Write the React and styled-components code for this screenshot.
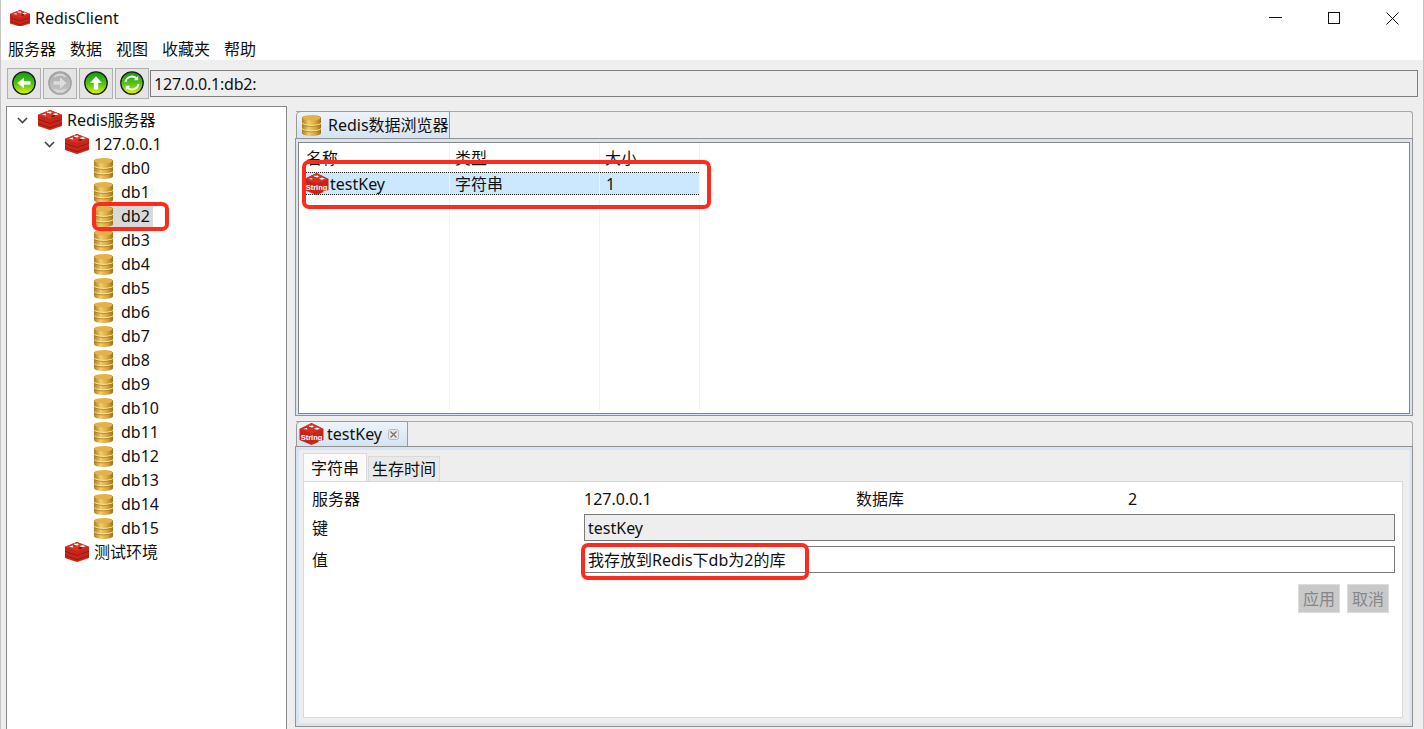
import React from 'react';
import styled, { createGlobalStyle } from 'styled-components';

const GlobalStyle = createGlobalStyle`
  html, body {
    margin: 0;
    padding: 0;
    background: #fff;
  }
  body {
    font-family: "Noto Sans", "Noto Sans CJK SC", sans-serif;
    font-size: 16px;
    line-height: 22px;
    color: #111;
  }
  * { box-sizing: border-box; }
  svg { flex: none; }
`;

const Window = styled.div`
  position: relative;
  width: 1424px;
  height: 729px;
  overflow: hidden;
  display: flex;
  flex-direction: column;
  border-left: 1px solid #c4c4c4;
  border-right: 1px solid #c4c4c4;
`;

const TitleBar = styled.div`
  height: 38px;
  display: flex;
  align-items: center;
  padding: 0 0 2px 9px;
  background: #fff;
`;

const TitleText = styled.span`
  margin-left: 5px;
  flex: 1;
`;

const WinControls = styled.div`
  display: flex;
  width: 154px;
  justify-content: space-between;
  padding-right: 24px;
`;

const MenuBar = styled.div`
  height: 22px;
  display: flex;
  gap: 14px;
  padding-left: 7px;
  background: #fff;
`;

const Toolbar = styled.div`
  height: 46px;
  display: flex;
  align-items: center;
  padding: 0 5px 0 6px;
  background: #eeeeee;
`;

const ToolButton = styled.div`
  width: 34px;
  height: 31px;
  margin-right: 2px;
  display: flex;
  align-items: center;
  justify-content: center;
  background: #e4e4e4;
  border: 1px solid #b0b0b0;
`;

const AddressBar = styled.div`
  flex: 1;
  height: 27px;
  margin-left: -1px;
  padding: 2px 3px;
  letter-spacing: -0.2px;
  background: #eeeeee;
  border: 1px solid #7e7e7e;
`;

const Main = styled.div`
  flex: 1;
  display: flex;
  gap: 8px;
  padding-left: 5px;
  background: #eeeeee;
  min-height: 0;
`;

const Tree = styled.div`
  width: 281px;
  height: 640px;
  padding-top: 1px;
  background: #fff;
  border: 1px solid #85898c;
  border-width: 1px 1.5px 1px 1.5px;
`;

const TreeRow = styled.div`
  height: 24px;
  display: flex;
  align-items: center;
  padding-left: ${({ $pad }) => $pad}px;
`;

const Chevron = styled.div`
  width: 16px;
  margin-right: 8px;
  display: flex;
  justify-content: center;
  flex: none;
`;

const TreeItem = styled.div`
  display: flex;
  align-items: center;
  height: 21px;
  background: ${({ $selected }) => ($selected ? '#d9d9d9' : 'transparent')};
`;

const TreeLabel = styled.span`
  margin-left: ${({ $gap }) => $gap}px;
  padding-right: 3px;
  white-space: nowrap;
`;

const RightSide = styled.div`
  width: 1118px;
  display: flex;
  flex-direction: column;
  gap: 5px;
  padding-top: 5px;
`;

const TabStrip = styled.div`
  display: flex;
  height: ${({ $h }) => $h}px;
  flex: none;
  border-top: 1px solid #a8a8a8;
  border-right: 1px solid #a8a8a8;
  border-top-right-radius: 3px;
  margin-left: 1px;
`;

const ViewTab = styled.div`
  width: ${({ $w }) => $w}px;
  display: flex;
  align-items: center;
  margin-top: -1px;
  height: calc(100% + 1px);
  padding-left: ${({ $pl }) => $pl}px;
  background: linear-gradient(#eef3f9, #d4e3f2);
  border: 1px solid #9a9a9a;
  border-bottom: none;
  border-top-left-radius: 5px;
  border-top-right-radius: 2px;
`;

const ViewPanel = styled.div`
  height: ${({ $h }) => $h}px;
  display: flex;
  flex-direction: column;
`;

const ViewBody = styled.div`
  flex: 1;
  min-height: 0;
  display: flex;
  flex-direction: column;
  padding: ${({ $p }) => $p};
  background: #d6e4f3;
  border: 1px solid #929292;
`;

const Table = styled.div`
  height: 100%;
  padding-left: 1px;
  display: flex;
  background: #fff;
  border: 1px solid #858585;
`;

const Column = styled.div`
  width: ${({ $w }) => $w}px;
  height: 267px;
  border-right: 1px solid #eef3f8;
  flex: none;
`;

const HeadCell = styled.div`
  height: 29px;
  padding: 4px 0 0 ${({ $pl }) => $pl}px;
`;

const Cell = styled.div`
  height: 23px;
  margin-left: ${({ $ml }) => $ml}px;
  padding-left: ${({ $pl }) => $pl}px;
  display: flex;
  align-items: center;
  gap: 1px;
  background: #cce8ff;
  border-top: 1px dotted #222;
  border-bottom: 1px dotted #222;
`;

const DetailSheet = styled.div`
  flex: 1;
  min-height: 0;
  display: flex;
  flex-direction: column;
  padding: 0 7px 5px 4px;
  background: #eeeeee;
`;

const SubTabs = styled.div`
  display: flex;
  align-items: flex-end;
  height: 31px;
  flex: none;
`;

const SubTab = styled.div`
  height: ${({ $active }) => ($active ? 28 : 25)}px;
  padding: 0 ${({ $active }) => ($active ? 7 : 3)}px;
  margin-right: 1px;
  display: flex;
  align-items: center;
  background: ${({ $active }) => ($active ? '#fafafa' : '#e9e9e9')};
  border: 1px solid #d9d9d9;
  border-bottom: none;
`;

const SubPanel = styled.div`
  flex: 1;
  padding: 6px 0 0 8px;
  background: #fff;
  border: 1px solid #d9d9d9;
`;

const FormGrid = styled.div`
  display: grid;
  grid-template-columns: 272px 272px 272px 267px;
  grid-template-rows: 21px 27px 27px;
  row-gap: 5px;
  align-items: center;
`;

const Plain = styled.span``;

const Field = styled.div`
  grid-column: 2 / 5;
  height: 27px;
  padding: 2px 3px;
  border: 1px solid #7a7a7a;
  background: ${({ $readOnly }) => ($readOnly ? '#eeeeee' : '#fff')};
`;

const ButtonRow = styled.div`
  display: flex;
  justify-content: flex-end;
  gap: 7px;
  margin: 11px 13px 0 0;
`;

const DisabledButton = styled.div`
  width: 42px;
  height: 29px;
  display: flex;
  align-items: center;
  justify-content: center;
  color: #868686;
  background: #c9c9c9;
  border: 1px solid #dcdcdc;
`;

const RedMark = styled.div`
  position: absolute;
  left: ${({ $x }) => $x}px;
  top: ${({ $y }) => $y}px;
  width: ${({ $w }) => $w}px;
  height: ${({ $h }) => $h}px;
  border: 4px solid #fe2a1c;
  border-radius: 7px;
  pointer-events: none;
`;

const RedisLogo = ({ size = 24 }) => (
  <svg width={size} height={size * 0.84} viewBox="0 0 24 20">
    <path d="M0 4.600 12 0l12 4.600v11.400L12 20 0 16z" fill="#c9261b" />
    <path d="M0 4.600 12 0l12 4.600-12 4.200z" fill="#dc3226" />
    <path d="M0 9.200l12 4.200 12-4.200" fill="none" stroke="#8e1a10" strokeWidth=".9" />
    <path d="M0 13.400l12 4.200 12-4.200" fill="none" stroke="#8e1a10" strokeWidth=".9" />
    <path d="M9.200 1.500l2 .5 1.300-1 .2 1.100 2 .5-2 .4-.5 1.100-.9-1.100-2-.2z" fill="#fff" />
    <path d="M4 4.600l3.600-1.100.6 1.800z" fill="#fff" />
    <path d="M13.200 5.800l3.300-1.100 1 1.300-3.300 1.200z" fill="#7a0c00" />
    <path d="M17.500 2.900l3 1.200-3 1.100-2.900-1.100z" fill="#fff" />
  </svg>
);

const StringIcon = () => (
  <svg width="25" height="22" viewBox="0 0 25 22">
    <path d="M.5 6 12.500 0l12 6v11l-12 5-12-5z" fill="#c4261b" />
    <path d="M.5 6l12-6 12 6-12 4.600z" fill="#d92f23" />
    <path d="M10 2.400l2 .5 1.400-.9.200 1.100 2 .6-2 .3-.6 1.100-.8-1.100-2-.3z" fill="#fff" />
    <path d="M4.500 6l3.400-1 .6 1.600z" fill="#fff" />
    <path d="M18 4.600l3 1.100-3 1.100-3-1.100z" fill="#fff" />
    <text x="12.500" y="16.500" textAnchor="middle" fontSize="7.500" fontWeight="700" fontFamily="Liberation Sans, sans-serif" fill="#fff">String</text>
  </svg>
);

const DbIcon = ({ id }) => (
  <svg width="19" height="21" viewBox="0 0 19 21">
    <defs>
      <linearGradient id={id} x1="0" x2="1" y1="0" y2="0">
        <stop offset="0" stopColor="#a97c1e" />
        <stop offset="0.35" stopColor="#efcd6e" />
        <stop offset="0.7" stopColor="#d9a83c" />
        <stop offset="1" stopColor="#9c7018" />
      </linearGradient>
    </defs>
    <path d="M0 3c0-4 19-4 19 0v15c0 4-19 4-19 0z" fill={`url(#${id})`} />
    <ellipse cx="9.500" cy="3" rx="9" ry="2.400" fill="#e3b348" />
    <path d="M0 8c2 3.200 17 3.200 19 0M0 13.500c2 3.200 17 3.200 19 0" fill="none" stroke="#f8e6a8" strokeWidth="1.100" />
    <path d="M0 9c2 3.200 17 3.200 19 0M0 14.500c2 3.200 17 3.200 19 0" fill="none" stroke="#a57c20" strokeWidth="0.800" />
  </svg>
);

const ChevronIcon = () => (
  <svg width="11" height="7" viewBox="0 0 11 7">
    <path d="M1 1l4.500 4.500L10 1" fill="none" stroke="#444" strokeWidth="1.600" />
  </svg>
);

const arrows = {
  back: <path d="M18.500 10.200H12V6.500L5.500 12l6.500 5.500v-3.700h6.500z" fill="#fff" />,
  forward: (
    <g fill="#dcdcdc">
      <path d="M5.500 10.200H12V6.500l6.500 5.500-6.500 5.500v-3.700H5.500z" />
      <path d="M6 5.500a8 8 0 0 1 12 0l-1 1a7 7 0 0 0-10 0zM6 18.500a8 8 0 0 0 12 0l-1-1a7 7 0 0 1-10 0z" />
    </g>
  ),
  up: <path d="M9.800 18.500V12H6.100L12 5.300l5.900 6.700h-3.700v6.500z" fill="#fff" />,
  refresh: (
    <g fill="none" stroke="#fff" strokeWidth="2">
      <path d="M5.500 11a6.500 6.500 0 0 1 11-3.600" />
      <path d="M18.500 13a6.500 6.500 0 0 1-11 3.600" />
      <path d="M18.200 4.800v4.400h-4.400zM5.800 19.200v-4.400h4.400z" fill="#fff" stroke="none" />
    </g>
  ),
};

const Ball = ({ kind, off }) => (
  <svg width="24" height="24" viewBox="0 0 24 24">
    <defs>
      <linearGradient id={`ball-${kind}`} x1="0" x2="0" y1="0" y2="1">
        <stop offset="0" stopColor={off ? '#adadad' : '#0b9c14'} />
        <stop offset="0.55" stopColor={off ? '#b8b8b8' : '#58c416'} />
        <stop offset="1" stopColor={off ? '#c8c8c8' : '#e8f408'} />
      </linearGradient>
    </defs>
    <circle cx="12" cy="12" r="11.200" fill={`url(#ball-${kind})`} stroke={off ? '#a0a0a0' : '#1c1c1c'} strokeWidth="1.300" />
    {arrows[kind]}
  </svg>
);

const dbs = Array.from({ length: 16 }, (_, i) => `db${i}`);

const App = () => (
  <Window>
    <GlobalStyle />
    <TitleBar>
      <RedisLogo size={20} />
      <TitleText>RedisClient</TitleText>
      <WinControls>
        <svg width="13" height="13" viewBox="0 0 13 13"><path d="M0 5.500h13" stroke="#111" strokeWidth="1" /></svg>
        <svg width="13" height="13" viewBox="0 0 13 13"><rect x=".5" y=".5" width="11" height="11" fill="none" stroke="#111" /></svg>
        <svg width="13" height="13" viewBox="0 0 13 13"><path d="M.5.500l12 12M12.500.500l-12 12" stroke="#111" strokeWidth="1" /></svg>
      </WinControls>
    </TitleBar>
    <MenuBar>
      {['服务器', '数据', '视图', '收藏夹', '帮助'].map((m) => <span key={m}>{m}</span>)}
    </MenuBar>
    <Toolbar>
      <ToolButton><Ball kind="back" /></ToolButton>
      <ToolButton><Ball kind="forward" off /></ToolButton>
      <ToolButton><Ball kind="up" /></ToolButton>
      <ToolButton><Ball kind="refresh" /></ToolButton>
      <AddressBar>127.0.0.1:db2:</AddressBar>
    </Toolbar>
    <Main>
      <Tree>
        <TreeRow $pad={7}>
          <Chevron><ChevronIcon /></Chevron>
          <RedisLogo />
          <TreeLabel $gap={5}>Redis服务器</TreeLabel>
        </TreeRow>
        <TreeRow $pad={34}>
          <Chevron><ChevronIcon /></Chevron>
          <RedisLogo />
          <TreeLabel $gap={5}>127.0.0.1</TreeLabel>
        </TreeRow>
        {dbs.map((db) => (
          <TreeRow key={db} $pad={63}>
            <Chevron />
            <TreeItem $selected={db === 'db2'}>
              <DbIcon id={`grad-${db}`} />
              <TreeLabel $gap={8}>{db}</TreeLabel>
            </TreeItem>
          </TreeRow>
        ))}
        <TreeRow $pad={34}>
          <Chevron />
          <RedisLogo />
          <TreeLabel $gap={5}>测试环境</TreeLabel>
        </TreeRow>
      </Tree>
      <RightSide>
        <ViewPanel $h={305}>
          <TabStrip $h={27}>
            <ViewTab $w={154} $pl={5}>
              <DbIcon id="grad-tab" />
              <TreeLabel $gap={7}>Redis数据浏览器</TreeLabel>
            </ViewTab>
          </TabStrip>
          <ViewBody $p="3px 2px 1px 2px">
            <Table>
              <Column $w={150}>
                <HeadCell $pl={6}>名称</HeadCell>
                <Cell $ml={4} $pl={0}><StringIcon />testKey</Cell>
              </Column>
              <Column $w={150}>
                <HeadCell $pl={5}>类型</HeadCell>
                <Cell $ml={0} $pl={5}>字符串</Cell>
              </Column>
              <Column $w={100}>
                <HeadCell $pl={5}>大小</HeadCell>
                <Cell $ml={0} $pl={6}>1</Cell>
              </Column>
            </Table>
          </ViewBody>
        </ViewPanel>
        <ViewPanel $h={306}>
          <TabStrip $h={25}>
            <ViewTab $w={112} $pl={2}>
              <StringIcon />
              <TreeLabel $gap={3}>testKey</TreeLabel>
              <svg width="11" height="11" viewBox="0 0 11 11" style={{ marginLeft: 3 }}>
                <rect x=".5" y=".5" width="10" height="10" rx="2" fill="#e8e8e8" stroke="#bbb" />
                <path d="M2.500 2.500l6 6M8.500 2.500l-6 6" stroke="#777" strokeWidth="1.400" />
              </svg>
            </ViewTab>
          </TabStrip>
          <ViewBody $p="3px 2px 3px 3px">
            <DetailSheet>
              <SubTabs>
                <SubTab $active>字符串</SubTab>
                <SubTab>生存时间</SubTab>
              </SubTabs>
              <SubPanel>
                <FormGrid>
                  <Plain>服务器</Plain>
                  <Plain>127.0.0.1</Plain>
                  <Plain>数据库</Plain>
                  <Plain>2</Plain>
                  <Plain>键</Plain>
                  <Field $readOnly>testKey</Field>
                  <Plain>值</Plain>
                  <Field>我存放到Redis下db为2的库</Field>
                </FormGrid>
                <ButtonRow>
                  <DisabledButton>应用</DisabledButton>
                  <DisabledButton>取消</DisabledButton>
                </ButtonRow>
              </SubPanel>
            </DetailSheet>
          </ViewBody>
        </ViewPanel>
      </RightSide>
    </Main>
    <RedMark $x={91} $y={202} $w={77} $h={29} />
    <RedMark $x={301} $y={160} $w={409} $h={49} />
    <RedMark $x={580} $y={543} $w={228} $h={37} />
  </Window>
);

export default App;
